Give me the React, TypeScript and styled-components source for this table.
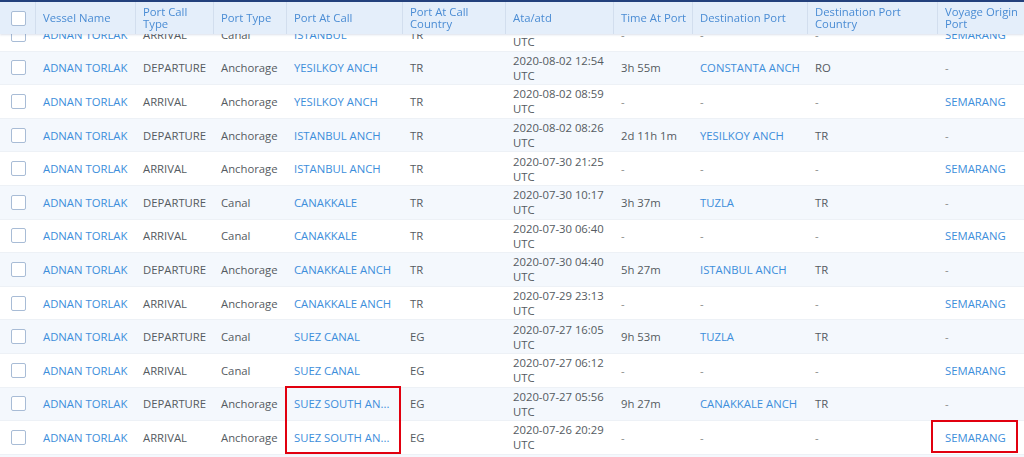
import React, { useLayoutEffect, useRef } from "react";
import styled, { createGlobalStyle } from "styled-components";

const Global = createGlobalStyle`
  html, body { margin: 0; padding: 0; background: #fff; }
  body { font-family: "Open Sans", "Noto Sans", Arial, sans-serif; }
  * { box-sizing: border-box; }
`;

const COLS = "35px 100px 78px 73px 116px 103px 108px 79px 115px 130px 1fr";

const Page = styled.div`
  position: relative;
  width: 1024px;
  height: 457px;
  overflow: hidden;
`;

const Viewport = styled.div`
  height: 457px;
  overflow: hidden;
`;

const HeaderRow = styled.div`
  position: sticky;
  top: 0;
  z-index: 2;
  display: grid;
  grid-template-columns: ${COLS};
  height: 34px;
  background: #e4eefa;
  border-top: 2px solid #23407c;
  box-shadow: 0 1px 2px rgba(60, 90, 140, 0.18);
`;

const HeadCell = styled.div<{ $first?: boolean }>`
  display: flex;
  align-items: center;
  padding: 0 2px 0 7px;
  font-size: 11.3px;
  line-height: 12px;
  color: #4a8cd4;
  border-left: ${(p) => (p.$first ? "none" : "1px solid #d2deee")};
  ${(p) => (p.$first ? "padding-left: 11px;" : "")}
`;

const Row = styled.div<{ $tint: boolean }>`
  display: grid;
  grid-template-columns: ${COLS};
  height: 33.6px;
  background: ${(p) => (p.$tint ? "#f4f8fd" : "#ffffff")};
  border-bottom: 1px solid #edf1f6;
`;

const Cell = styled.div<{ $link?: boolean; $dim?: boolean }>`
  display: flex;
  align-items: center;
  padding: 0 8px;
  font-size: 11.3px;
  line-height: 15px;
  color: ${(p) => (p.$link ? "#3d8edb" : p.$dim ? "#8a8a8a" : "#555b61")};
  white-space: nowrap;
  overflow: hidden;
  min-width: 0;
`;

const DateCell = styled(Cell)`
  flex-direction: column;
  align-items: flex-start;
  justify-content: center;
`;

const CheckCell = styled.div`
  display: flex;
  align-items: center;
  padding-left: 11px;
`;

const Box = styled.span`
  display: block;
  width: 15px;
  height: 15px;
  border: 1px solid #a8bcd6;
  border-radius: 2px;
  background: #fff;
`;

const Highlight = styled.div`
  position: absolute;
  border: 2.5px solid #e1000f;
  pointer-events: none;
  z-index: 5;
`;

type R = {
  type: string;
  ptype: string;
  port: string;
  country: string;
  date: string;
  time: string;
  dest: string;
  destC: string;
  origin: string;
};

const rows: R[] = [
  { type: "ARRIVAL", ptype: "Canal", port: "ISTANBUL", country: "TR", date: "2020-08-02 04:41", time: "-", dest: "-", destC: "-", origin: "SEMARANG" },
  { type: "DEPARTURE", ptype: "Anchorage", port: "YESILKOY ANCH", country: "TR", date: "2020-08-02 12:54", time: "3h 55m", dest: "CONSTANTA ANCH", destC: "RO", origin: "-" },
  { type: "ARRIVAL", ptype: "Anchorage", port: "YESILKOY ANCH", country: "TR", date: "2020-08-02 08:59", time: "-", dest: "-", destC: "-", origin: "SEMARANG" },
  { type: "DEPARTURE", ptype: "Anchorage", port: "ISTANBUL ANCH", country: "TR", date: "2020-08-02 08:26", time: "2d 11h 1m", dest: "YESILKOY ANCH", destC: "TR", origin: "-" },
  { type: "ARRIVAL", ptype: "Anchorage", port: "ISTANBUL ANCH", country: "TR", date: "2020-07-30 21:25", time: "-", dest: "-", destC: "-", origin: "SEMARANG" },
  { type: "DEPARTURE", ptype: "Canal", port: "CANAKKALE", country: "TR", date: "2020-07-30 10:17", time: "3h 37m", dest: "TUZLA", destC: "TR", origin: "-" },
  { type: "ARRIVAL", ptype: "Canal", port: "CANAKKALE", country: "TR", date: "2020-07-30 06:40", time: "-", dest: "-", destC: "-", origin: "SEMARANG" },
  { type: "DEPARTURE", ptype: "Anchorage", port: "CANAKKALE ANCH", country: "TR", date: "2020-07-30 04:40", time: "5h 27m", dest: "ISTANBUL ANCH", destC: "TR", origin: "-" },
  { type: "ARRIVAL", ptype: "Anchorage", port: "CANAKKALE ANCH", country: "TR", date: "2020-07-29 23:13", time: "-", dest: "-", destC: "-", origin: "SEMARANG" },
  { type: "DEPARTURE", ptype: "Canal", port: "SUEZ CANAL", country: "EG", date: "2020-07-27 16:05", time: "9h 53m", dest: "TUZLA", destC: "TR", origin: "-" },
  { type: "ARRIVAL", ptype: "Canal", port: "SUEZ CANAL", country: "EG", date: "2020-07-27 06:12", time: "-", dest: "-", destC: "-", origin: "SEMARANG" },
  { type: "DEPARTURE", ptype: "Anchorage", port: "SUEZ SOUTH AN...", country: "EG", date: "2020-07-27 05:56", time: "9h 27m", dest: "CANAKKALE ANCH", destC: "TR", origin: "-" },
  { type: "ARRIVAL", ptype: "Anchorage", port: "SUEZ SOUTH AN...", country: "EG", date: "2020-07-26 20:29", time: "-", dest: "-", destC: "-", origin: "SEMARANG" },
  { type: "DEPARTURE", ptype: "Anchorage", port: "SINGAPORE ANCH", country: "SG", date: "2020-07-12 09:14", time: "1d 2h 5m", dest: "SUEZ SOUTH ANCH", destC: "EG", origin: "-" },
];

const headers = [
  "Vessel Name",
  "Port Call Type",
  "Port Type",
  "Port At Call",
  "Port At Call Country",
  "Ata/atd",
  "Time At Port",
  "Destination Port",
  "Destination Port Country",
  "Voyage Origin Port",
];

const isDash = (s: string) => s === "-";

export default function App() {
  const ref = useRef<HTMLDivElement>(null);
  useLayoutEffect(() => {
    if (ref.current) ref.current.scrollTop = 16;
  }, []);
  return (
    <Page>
      <Global />
      <Viewport ref={ref}>
        <HeaderRow>
          <HeadCell $first>
            <Box />
          </HeadCell>
          {headers.map((h) => (
            <HeadCell key={h}>{h}</HeadCell>
          ))}
        </HeaderRow>
        {rows.map((r, i) => (
          <Row key={i} $tint={i % 2 === 1}>
            <CheckCell>
              <Box />
            </CheckCell>
            <Cell $link>ADNAN TORLAK</Cell>
            <Cell>{r.type}</Cell>
            <Cell>{r.ptype}</Cell>
            <Cell $link>{r.port}</Cell>
            <Cell>{r.country}</Cell>
            <DateCell>
              <span>{r.date}</span>
              <span>UTC</span>
            </DateCell>
            <Cell $dim={isDash(r.time)}>{r.time}</Cell>
            <Cell $link={!isDash(r.dest)} $dim={isDash(r.dest)}>
              {r.dest}
            </Cell>
            <Cell $dim={isDash(r.destC)}>{r.destC}</Cell>
            <Cell $link={!isDash(r.origin)} $dim={isDash(r.origin)}>
              {r.origin}
            </Cell>
          </Row>
        ))}
      </Viewport>
      <Highlight style={{ left: 285, top: 386, width: 116, height: 68 }} />
      <Highlight style={{ left: 931, top: 420, width: 87, height: 33 }} />
    </Page>
  );
}
